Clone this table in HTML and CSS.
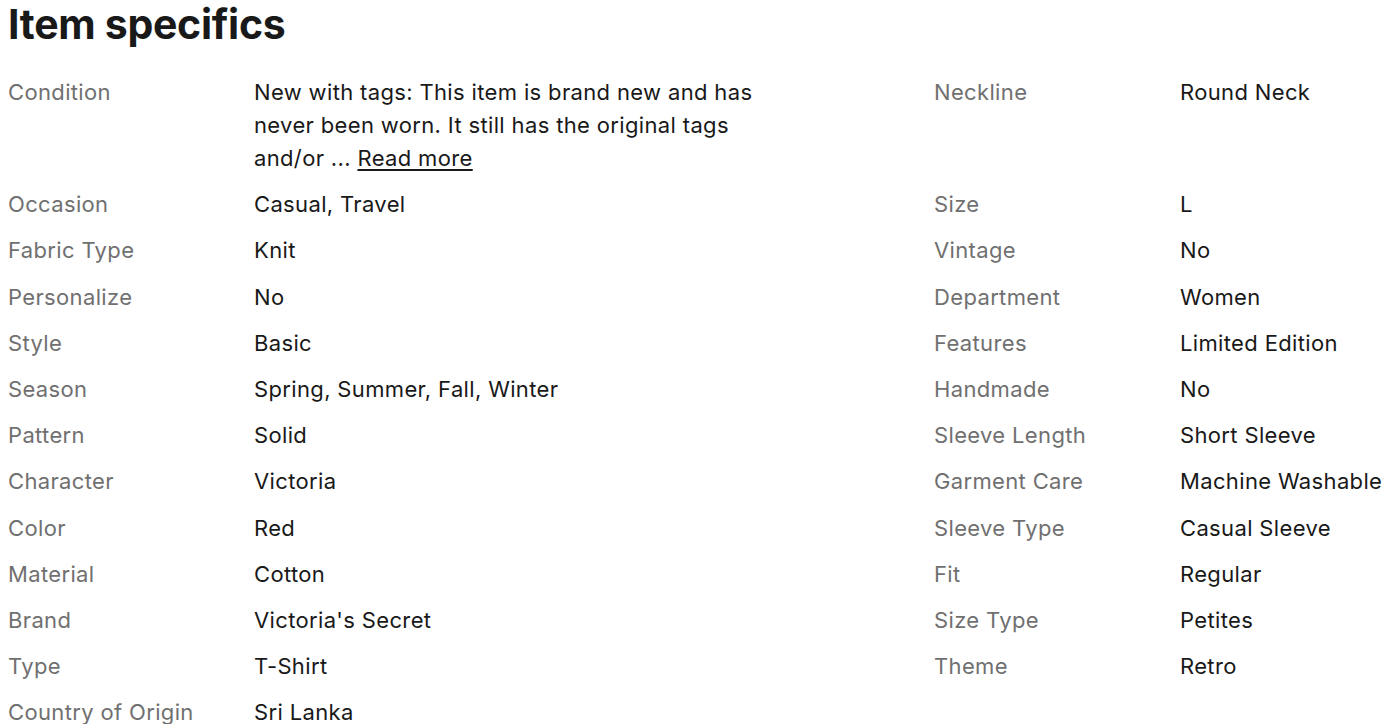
FILE: index.html
```html
<!DOCTYPE html>
<html lang="en">
<head>
    <meta charset="UTF-8">
    <meta name="viewport" content="width=device-width, initial-scale=1.0">
    <title>Item specifics</title>
    <link rel="stylesheet" href="styles.css">
</head>
<body>
    <section class="specs">
        <h2 class="specs-title">Item specifics</h2>
        <div class="specs-grid">
            <div class="label">Condition</div>
            <div class="value">New with tags: This item is brand new and has never been worn. It still has the original tags and/or ... <a href="#" class="more">Read more</a></div>
            <div class="label">Neckline</div>
            <div class="value">Round Neck</div>

            <div class="label">Occasion</div>
            <div class="value">Casual, Travel</div>
            <div class="label">Size</div>
            <div class="value">L</div>

            <div class="label">Fabric Type</div>
            <div class="value">Knit</div>
            <div class="label">Vintage</div>
            <div class="value">No</div>

            <div class="label">Personalize</div>
            <div class="value">No</div>
            <div class="label">Department</div>
            <div class="value">Women</div>

            <div class="label">Style</div>
            <div class="value">Basic</div>
            <div class="label">Features</div>
            <div class="value">Limited Edition</div>

            <div class="label">Season</div>
            <div class="value">Spring, Summer, Fall, Winter</div>
            <div class="label">Handmade</div>
            <div class="value">No</div>

            <div class="label">Pattern</div>
            <div class="value">Solid</div>
            <div class="label">Sleeve Length</div>
            <div class="value">Short Sleeve</div>

            <div class="label">Character</div>
            <div class="value">Victoria</div>
            <div class="label">Garment Care</div>
            <div class="value">Machine Washable</div>

            <div class="label">Color</div>
            <div class="value">Red</div>
            <div class="label">Sleeve Type</div>
            <div class="value">Casual Sleeve</div>

            <div class="label">Material</div>
            <div class="value">Cotton</div>
            <div class="label">Fit</div>
            <div class="value">Regular</div>

            <div class="label">Brand</div>
            <div class="value">Victoria's Secret</div>
            <div class="label">Size Type</div>
            <div class="value">Petites</div>

            <div class="label">Type</div>
            <div class="value">T-Shirt</div>
            <div class="label">Theme</div>
            <div class="value">Retro</div>

            <div class="label">Country of Origin</div>
            <div class="value">Sri Lanka</div>
        </div>
    </section>
</body>
</html>
```

FILE: styles.css
```css
:root {
    --cor_texto: #191919;
    --cor_label: #707070;
}

body {
    font-family: Inter, "Open Sans", Arial, sans-serif;
    background-color: #ffffff;
    color: var(--cor_texto);
    margin: 0;
    padding: 0 8px;
}

.specs-title {
    font-size: 41px;
    font-weight: 700;
    line-height: 48px;
    margin: 0 0 28px 0;
    letter-spacing: -0.3px;
}

.specs-grid {
    display: grid;
    grid-template-columns: 246px 680px 246px 1fr;
    row-gap: 13.2px;
    font-size: 22px;
    line-height: 33px;
    letter-spacing: 0.35px;
}

.label {
    color: var(--cor_label);
}

.value {
    color: var(--cor_texto);
    max-width: 520px;
}

.more {
    color: var(--cor_texto);
    text-decoration: underline;
    text-underline-offset: 3px;
}
```
